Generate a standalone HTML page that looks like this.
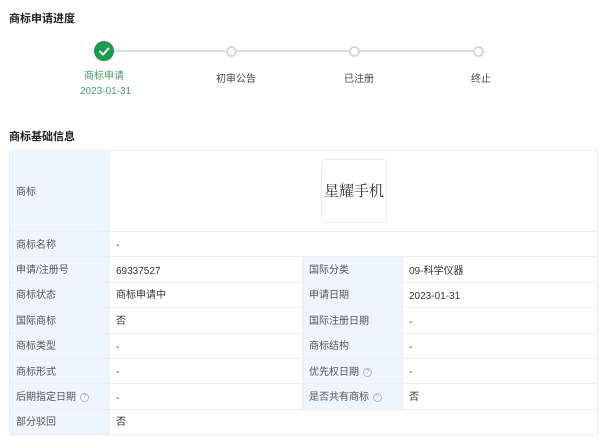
<!DOCTYPE html>
<html><head><meta charset="utf-8"><style>
*{margin:0;padding:0;box-sizing:border-box}
body{width:600px;height:438px;background:#fff;font-family:"Liberation Sans","Noto Sans CJK SC",sans-serif;font-size:10px;color:#333;position:relative;overflow:hidden}
.a{position:absolute;white-space:nowrap;line-height:12px}
h3{position:absolute;left:9px;font-size:11px;font-weight:bold;color:#222}
.line{position:absolute;height:2px;background:#e0e0e0;top:50px}
.dot{position:absolute;width:11px;height:11px;border:2px solid #d8d8d8;border-radius:50%;background:#fff;top:45.5px}
.lbl{color:#444}
table{position:absolute;left:9px;top:150px;width:589px;border-collapse:collapse;table-layout:fixed}
td{border:1px solid #eceff3;height:25.4px;padding:3px 6px 0;font-size:10px;color:#333;line-height:12px;vertical-align:middle}
td span.t{display:inline-block;vertical-align:middle;line-height:12px;position:relative;top:1px}
td.k{background:#eef5fd;color:#555}
.q{display:inline-block;width:9px;height:9px;border:1px solid #bbb;border-radius:50%;font-size:7px;line-height:8px;text-align:center;color:#bbb;margin-left:4px;vertical-align:middle}
</style></head><body>
<h3 style="top:10px">商标申请进度</h3>
<div class="line" style="left:112px;width:113px"></div>
<div class="line" style="left:237px;width:112px"></div>
<div class="line" style="left:360px;width:113px"></div>
<div class="a" style="left:94px;top:41px;width:20px;height:20px;border-radius:50%;background:#1e9a4b"></div>
<svg class="a" style="left:94px;top:41px" width="20" height="20"><path d="M6 10.5l3 3 5.5-6" stroke="#fff" stroke-width="2" fill="none" stroke-linecap="round" stroke-linejoin="round"/></svg>
<div class="dot" style="left:225.5px"></div>
<div class="dot" style="left:348.5px"></div>
<div class="dot" style="left:472.5px"></div>
<div class="a" style="left:84px;top:71px;color:#4a9e68">商标申请</div>
<div class="a" style="left:80px;top:86px;color:#4a9e68">2023-01-31</div>
<div class="a lbl" style="left:216px;top:74px">初审公告</div>
<div class="a lbl" style="left:344px;top:74px">已注册</div>
<div class="a lbl" style="left:471px;top:74px">终止</div>
<h3 style="top:128px">商标基础信息</h3>
<table>
<colgroup><col style="width:100px"><col style="width:193px"><col style="width:100px"><col></colgroup>
<tr><td class="k" style="height:81px">商标</td><td colspan="3" style="position:relative"><div class="a" style="left:211px;top:8px;width:66px;height:64px;border:1px solid #eee;border-radius:3px;font-family:'Noto Serif CJK SC',serif;font-size:15px;line-height:62px;text-align:center;color:#333">星耀手机</div></td></tr>
<tr><td class="k">商标名称</td><td colspan="3"><span class="t">-</span></td></tr>
<tr><td class="k">申请/注册号</td><td><span class="t">69337527</span></td><td class="k">国际分类</td><td><span class="t">09-科学仪器</span></td></tr>
<tr><td class="k">商标状态</td><td>商标申请中</td><td class="k">申请日期</td><td><span class="t">2023-01-31</span></td></tr>
<tr><td class="k">国际商标</td><td>否</td><td class="k">国际注册日期</td><td><span class="t">-</span></td></tr>
<tr><td class="k">商标类型</td><td><span class="t">-</span></td><td class="k">商标结构</td><td><span class="t">-</span></td></tr>
<tr><td class="k">商标形式</td><td><span class="t">-</span></td><td class="k">优先权日期<span class="q">?</span></td><td><span class="t">-</span></td></tr>
<tr><td class="k">后期指定日期<span class="q">?</span></td><td><span class="t">-</span></td><td class="k">是否共有商标<span class="q">?</span></td><td>否</td></tr>
<tr><td class="k">部分驳回</td><td colspan="3">否</td></tr>
</table>
</body></html>
